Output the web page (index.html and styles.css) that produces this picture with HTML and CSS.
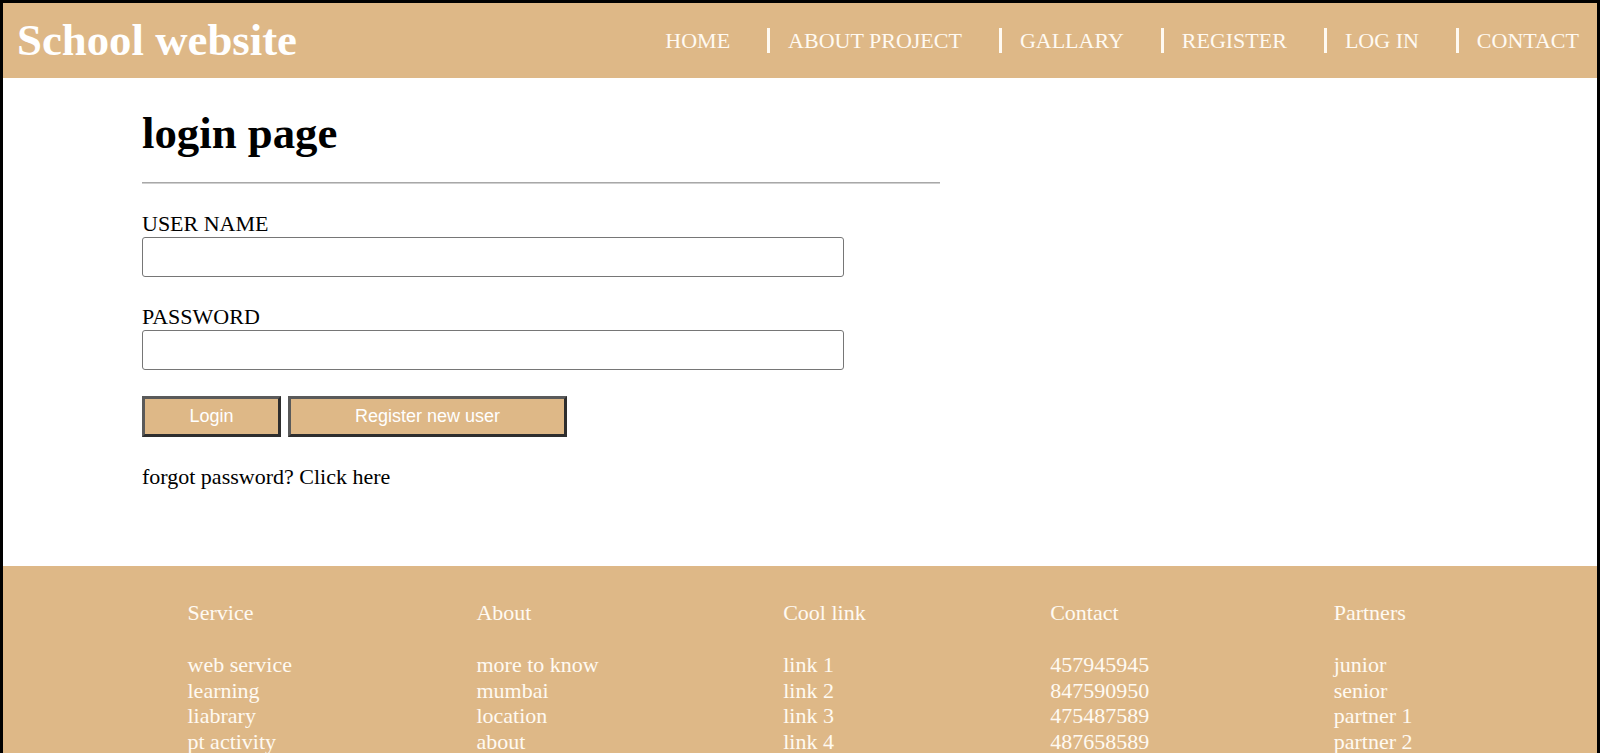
FILE: index.html
```html
<!DOCTYPE html>
<html lang="en">
<head>
<meta charset="utf-8">
<title>School website - login</title>
<link rel="stylesheet" href="styles.css">
</head>
<body>
<header class="topbar">
  <div class="brand">School website</div>
  <ul class="nav">
    <li class="nav-item">HOME</li>
    <li class="nav-item">ABOUT PROJECT</li>
    <li class="nav-item">GALLARY</li>
    <li class="nav-item">REGISTER</li>
    <li class="nav-item">LOG IN</li>
    <li class="nav-item">CONTACT</li>
  </ul>
</header>

<main class="content">
  <h1 class="page-title">login page</h1>
  <hr class="rule">
  <form class="login-form">
    <div class="field">
      <label class="field-label" for="user">USER NAME</label>
      <input class="field-input" id="user" type="text">
    </div>
    <div class="field">
      <label class="field-label" for="pass">PASSWORD</label>
      <input class="field-input" id="pass" type="password">
    </div>
    <div class="actions">
      <button class="btn btn-login" type="button">Login</button>
      <button class="btn btn-register" type="button">Register new user</button>
    </div>
    <p class="forgot">forgot password? Click here</p>
  </form>
</main>

<footer class="footer">
  <div class="footer-col">
    <div class="footer-head">Service</div>
    <div class="footer-item">web service</div>
    <div class="footer-item">learning</div>
    <div class="footer-item">liabrary</div>
    <div class="footer-item">pt activity</div>
  </div>
  <div class="footer-col">
    <div class="footer-head">About</div>
    <div class="footer-item">more to know</div>
    <div class="footer-item">mumbai</div>
    <div class="footer-item">location</div>
    <div class="footer-item">about</div>
  </div>
  <div class="footer-col">
    <div class="footer-head">Cool link</div>
    <div class="footer-item">link 1</div>
    <div class="footer-item">link 2</div>
    <div class="footer-item">link 3</div>
    <div class="footer-item">link 4</div>
  </div>
  <div class="footer-col">
    <div class="footer-head">Contact</div>
    <div class="footer-item">457945945</div>
    <div class="footer-item">847590950</div>
    <div class="footer-item">475487589</div>
    <div class="footer-item">487658589</div>
  </div>
  <div class="footer-col">
    <div class="footer-head">Partners</div>
    <div class="footer-item">junior</div>
    <div class="footer-item">senior</div>
    <div class="footer-item">partner 1</div>
    <div class="footer-item">partner 2</div>
  </div>
</footer>
</body>
</html>
```

FILE: styles.css
```css
html {
  scrollbar-width: none;
}
html::-webkit-scrollbar {
  display: none;
}
body {
  margin: 0;
  border: 3px solid #000;
  font-family: "Liberation Serif", "Times New Roman", serif;
  color: #000;
  background: #fff;
}

.topbar {
  display: flex;
  align-items: center;
  justify-content: space-between;
  height: 75px;
  padding-left: 14px;
  background: #deb887;
}
.brand {
  font-size: 44.8px;
  line-height: 1;
  font-weight: bold;
  color: #fff;
}
.nav {
  display: flex;
  list-style: none;
  margin: 0;
  padding: 0;
}
.nav-item {
  font-size: 22px;
  line-height: 25px;
  color: #fffaf2;
  padding: 0 18px;
}
.nav-item + .nav-item {
  margin-left: 19px;
  border-left: 3px solid #fffaf2;
}

.content {
  padding: 29px 0 77px 139px;
}
.page-title {
  margin: 0;
  font-size: 44.8px;
  line-height: 52px;
  font-weight: bold;
}
.rule {
  width: 798px;
  margin: 23px 0 0 0;
  height: 0;
  border: 0;
  border-top: 1px solid #a8a8a8;
  border-bottom: 1px solid #cfcfcf;
}
.login-form {
  margin: 0;
  padding-top: 27px;
}
.field {
  margin-bottom: 27px;
}
.field-label {
  display: block;
  font-size: 22px;
  line-height: 25px;
}
.field-input {
  display: block;
  box-sizing: border-box;
  width: 702px;
  height: 40px;
  margin: 1px 0 0 0;
  border: 1px solid #767676;
  border-radius: 3px;
  background: #fff;
  font-size: 18px;
}
.actions {
  display: flex;
  gap: 7px;
  margin-top: -1px;
}
.btn {
  box-sizing: border-box;
  height: 41px;
  background: #deb887;
  color: #fff;
  font-family: "Liberation Sans", Arial, sans-serif;
  font-size: 18px;
  border: 3px solid;
  border-color: #5a5a5a #2e2e2e #2e2e2e #5a5a5a;
  padding: 0;
}
.btn-login {
  width: 139px;
}
.btn-register {
  width: 279px;
}
.forgot {
  margin: 27px 0 0 0;
  font-size: 22px;
  line-height: 25px;
}

.footer {
  display: flex;
  justify-content: space-evenly;
  background: #deb887;
  color: #fffaf2;
  padding: 34px 0 40px;
  font-size: 22px;
  line-height: 25.6px;
}
.footer-head {
  margin-bottom: 26.6px;
}
```
